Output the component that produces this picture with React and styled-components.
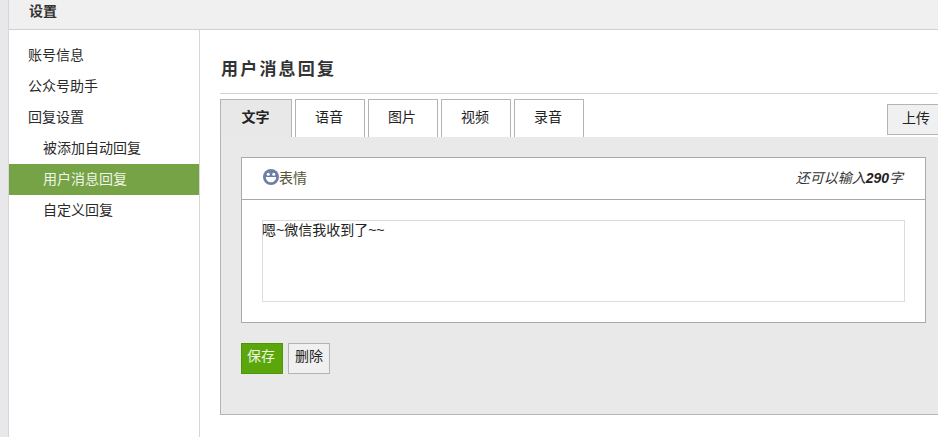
import styled, { createGlobalStyle } from 'styled-components';

const GlobalStyle = createGlobalStyle`
  html, body {
    margin: 0;
    padding: 0;
    height: 100%;
    overflow: hidden;
    background: #fff;
  }
  body {
    font-family: "Liberation Sans", "Noto Sans CJK SC", sans-serif;
    font-size: 14px;
    color: #222;
  }
`;

const Page = styled.div`
  width: 938px;
  height: 437px;
  box-sizing: border-box;
  padding-left: 8px;
  background: #e8e8ea;
  overflow: hidden;
`;

const Shell = styled.div`
  height: 100%;
  display: flex;
  flex-direction: column;
  background: #fff;
  border-left: 1px solid #d6d6d6;
`;

const Header = styled.header`
  height: 30px;
  flex: none;
  box-sizing: border-box;
  display: flex;
  align-items: center;
  padding: 0 0 10px 20px;
  background: #f0f0f0;
  border-bottom: 1px solid #d0d0d0;
  font-weight: 700;
  color: #333;
`;

const Body = styled.div`
  flex: 1;
  display: flex;
  min-height: 0;
`;

const Sidebar = styled.nav`
  width: 191px;
  flex: none;
  box-sizing: border-box;
  padding-top: 10px;
  border-right: 1px solid #d6d6d6;
`;

const NavItem = styled.div`
  height: 31px;
  line-height: 30px;
  padding-left: ${(p) => (p.$sub ? '34px' : '19px')};
  background: ${(p) => (p.$active ? '#76a346' : 'transparent')};
  color: ${(p) => (p.$active ? '#f1f5e8' : '#2a2a2a')};
`;

const Main = styled.main`
  flex: 1;
  min-width: 0;
  box-sizing: border-box;
  padding: 30px 0 0 20px;
`;

const Title = styled.h2`
  margin: 0;
  height: 33px;
  padding-left: 1px;
  font-size: 17px;
  line-height: 20px;
  font-weight: 700;
  letter-spacing: 2.2px;
  color: #333;
  border-bottom: 1px solid #d4d4d4;
`;

const TabRow = styled.div`
  margin-top: 5px;
  height: 38px;
  display: flex;
  align-items: flex-start;
  gap: 3px;
`;

const Tab = styled.div`
  width: ${(p) => (p.$active ? '72px' : '70px')};
  height: 38px;
  box-sizing: border-box;
  display: flex;
  align-items: center;
  justify-content: center;
  padding: 0 ${(p) => (p.$active ? '1px' : '2px')} 5px 0;
  border: 1px solid #b4b4b4;
  border-bottom: none;
  background: ${(p) => (p.$active ? '#e8e8e8' : '#fff')};
  font-weight: ${(p) => (p.$active ? 700 : 400)};
  color: #222;
`;

const UploadButton = styled.div`
  margin: 5px 0 0 auto;
  width: 51px;
  height: 31px;
  box-sizing: border-box;
  display: flex;
  align-items: center;
  justify-content: center;
  padding: 0 0 5px 6px;
  background: #f0f0f0;
  border: 1px solid #b4b4b4;
  border-right: none;
  color: #222;
`;

const Panel = styled.section`
  height: 278px;
  box-sizing: border-box;
  padding: 20px 12px 0 20px;
  background: #e9e9e9;
  border-left: 1px solid #b4b4b4;
  border-bottom: 1px solid #b4b4b4;
`;

const Editor = styled.div`
  height: 166px;
  box-sizing: border-box;
  background: #fff;
  border: 1px solid #aaa;
`;

const Toolbar = styled.div`
  height: 42px;
  box-sizing: border-box;
  display: flex;
  align-items: center;
  justify-content: space-between;
  padding: 0 22px 3px 21px;
  border-bottom: 1px solid #aaa;
`;

const EmojiLink = styled.div`
  display: flex;
  align-items: center;
  color: #54573a;
`;

const Counter = styled.div`
  font-size: 14px;
  font-style: italic;
  color: #333;

  b {
    color: #222;
  }
`;

const InputArea = styled.div`
  margin: 20px 20px 0;
  height: 82px;
  box-sizing: border-box;
  border: 1px solid #dcdcdc;
  line-height: 19px;
  text-indent: -1px;
  color: #222;
`;

const Actions = styled.div`
  margin-top: 20px;
  display: flex;
  gap: 5px;
`;

const Button = styled.div`
  width: 42px;
  height: 31px;
  box-sizing: border-box;
  display: flex;
  align-items: center;
  justify-content: center;
  padding: 0 ${(p) => (p.$primary ? '2px' : '0')} 7px 0;
  background: ${(p) => (p.$primary ? '#5ba70b' : '#f0f0f0')};
  border: 1px solid ${(p) => (p.$primary ? '#4f9509' : '#b4b4b4')};
  color: ${(p) => (p.$primary ? '#eef6e0' : '#222')};
`;

function SmileIcon() {
  return (
    <svg width="16" height="16" viewBox="0 0 17 17">
      <circle cx="8.5" cy="8.5" r="8.5" fill="#6c7fa6" />
      <circle cx="5.6" cy="5.6" r="1.6" fill="#fff" />
      <circle cx="11.4" cy="5.6" r="1.6" fill="#fff" />
      <path d="M3 8.4h11c0 3.3-2.5 5.6-5.5 5.6S3 11.7 3 8.4z" fill="#fff" />
    </svg>
  );
}

const TABS = ['文字', '语音', '图片', '视频', '录音'];

export default function App() {
  return (
    <Page>
      <GlobalStyle />
      <Shell>
        <Header>设置</Header>
        <Body>
          <Sidebar>
            <NavItem>账号信息</NavItem>
            <NavItem>公众号助手</NavItem>
            <NavItem>回复设置</NavItem>
            <NavItem $sub>被添加自动回复</NavItem>
            <NavItem $sub $active>用户消息回复</NavItem>
            <NavItem $sub>自定义回复</NavItem>
          </Sidebar>
          <Main>
            <Title>用户消息回复</Title>
            <TabRow>
              {TABS.map((tab, i) => (
                <Tab key={tab} $active={i === 0}>{tab}</Tab>
              ))}
              <UploadButton>上传</UploadButton>
            </TabRow>
            <Panel>
              <Editor>
                <Toolbar>
                  <EmojiLink>
                    <SmileIcon />
                    表情
                  </EmojiLink>
                  <Counter>
                    还可以输入<b>290</b>字
                  </Counter>
                </Toolbar>
                <InputArea>嗯~微信我收到了~~</InputArea>
              </Editor>
              <Actions>
                <Button $primary>保存</Button>
                <Button>删除</Button>
              </Actions>
            </Panel>
          </Main>
        </Body>
      </Shell>
    </Page>
  );
}
